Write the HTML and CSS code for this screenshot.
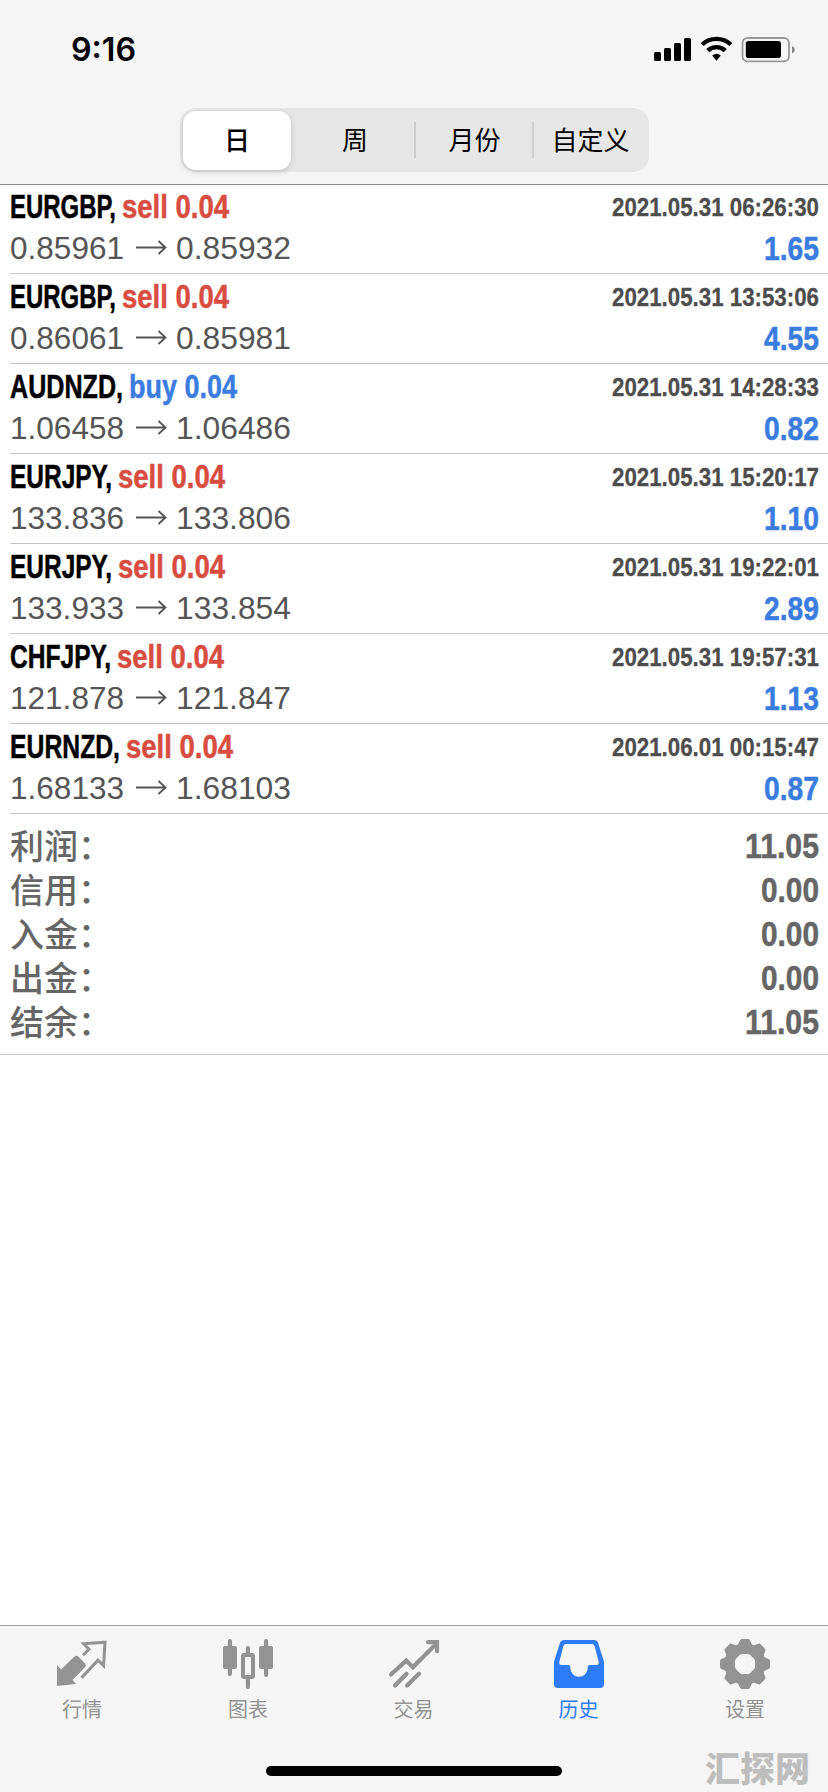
FILE: index.html
```html
<!DOCTYPE html>
<html lang="zh-CN">
<head>
<meta charset="utf-8">
<title>历史</title>
<link rel="stylesheet" href="styles.css">
</head>
<body>
<div class="app">
  <header class="top">
    <div class="status">
      <span class="clock"><span class="fit" data-w="65">9:16</span></span>
      <svg class="status-icons" width="144" height="28" viewBox="0 0 144 28">
        <rect x="1" y="16" width="7" height="9" rx="1.6"/>
        <rect x="11" y="12" width="7" height="13" rx="1.6"/>
        <rect x="21" y="7" width="7" height="18" rx="1.6"/>
        <rect x="31" y="2" width="7" height="23" rx="1.6"/>
        <g fill="none" stroke="#000" stroke-width="4.4">
          <path d="M49.2 8.500a21 21 0 0 1 28.600 0"/>
          <path d="M54.800 14.600a12.600 12.600 0 0 1 17.400 0"/>
        </g>
        <path d="M59.200 19.400q4.300-3.200 8.600 0L63.500 24.800z"/>
        <rect x="89.500" y="2" width="46.500" height="23.300" rx="5" fill="none" stroke="#999" stroke-width="1.800"/>
        <rect x="92.800" y="5" width="35.200" height="17" rx="2.800"/>
        <path d="M139 10q2.800 1 2.800 3.800t-2.800 3.800z" fill="#888"/>
      </svg>
    </div>
    <nav class="segments">
      <span class="seg seg-on">日</span>
      <span class="seg seg-week">周</span>
      <span class="seg seg-line">月份</span>
      <span class="seg seg-line">自定义</span>
    </nav>
  </header>

  <main class="content">
    <ul class="deals" id="deals"></ul>
    <dl class="totals">
      <div class="total"><dt>利润：</dt><dd><span class="fit" data-w="74">11.05</span></dd></div>
      <div class="total"><dt>信用：</dt><dd><span class="fit" data-w="58">0.00</span></dd></div>
      <div class="total"><dt>入金：</dt><dd><span class="fit" data-w="58">0.00</span></dd></div>
      <div class="total"><dt>出金：</dt><dd><span class="fit" data-w="58">0.00</span></dd></div>
      <div class="total"><dt>结余：</dt><dd><span class="fit" data-w="74">11.05</span></dd></div>
    </dl>
  </main>

  <footer class="tabs">
    <a class="tab">
      <svg width="52" height="52" viewBox="0 0 52 52">
        <path d="M1 27l4 4.400L18.500 18.600q2-1.800 3.800 0l6.800 7q1.600 1.800 0 3.600L16.500 42l3.500 4L1 48z" fill="currentColor"/>
        <path d="M27 17.300l6-6-5.400-5.600L49 4.200 47.600 27.600 42 22.200 25.600 39.600" fill="none" stroke="currentColor" stroke-width="3"/>
      </svg>
      <span>行情</span>
    </a>
    <a class="tab">
      <svg width="52" height="52" viewBox="0 0 52 52">
        <g fill="currentColor">
          <rect x="5.800" y="1" width="4.200" height="37" rx="2.100"/><rect x="1" y="8" width="14" height="23" rx="2"/>
          <rect x="42" y="1" width="4.200" height="38" rx="2.100"/><rect x="37" y="8" width="14" height="23" rx="2"/>
          <rect x="23.800" y="8" width="4.200" height="10" rx="2.100"/><rect x="23.800" y="38" width="4.200" height="13" rx="2.100"/>
        </g>
        <rect x="21" y="17" width="10" height="22" rx="1" fill="none" stroke="currentColor" stroke-width="4"/>
      </svg>
      <span>图表</span>
    </a>
    <a class="tab">
      <svg width="52" height="52" viewBox="0 0 52 52">
        <g fill="none" stroke="currentColor" stroke-width="4.200" stroke-linecap="round" stroke-linejoin="miter">
          <path d="M3 36.500L18.200 22.600l6.600 6.600L48 6"/>
          <path d="M40 4.200h9v9"/>
          <path d="M7 47.500L18.500 35.800M19 47.500L31 35.800"/>
        </g>
      </svg>
      <span>交易</span>
    </a>
    <a class="tab tab-on">
      <svg width="52" height="52" viewBox="0 0 52 52">
        <path fill="currentColor" fill-rule="evenodd" d="M11 2h30q3 0 4 2.800L50.500 22q.5 1.800.5 3.600V46q0 4-4 4H5q-4 0-4-4V25.600q0-1.800.5-3.600L7 4.800Q8 2 11 2zM13 6q-2 0-2.600 2L6.400 23.500q-.6 3.500 2 3.500H15.500q1.800 0 1.800 1.800V30a8.700 8.700 0 0 0 17.400 0v-1.200q0-1.800 1.800-1.800h7.100q2.600 0 2-3.500L41.600 8q-.6-2-2.600-2z"/>
      </svg>
      <span>历史</span>
    </a>
    <a class="tab">
      <svg width="52" height="52" viewBox="0 0 52 52">
        <g fill="currentColor" stroke="currentColor" stroke-width="4" stroke-linejoin="round">
          <path id="tooth" d="M19.500 10l3.500-7h6l3.500 7-6.500 4zM19.500 42l3.500 7h6l3.500-7-6.500-4z"/>
          <use href="#tooth" transform="rotate(45 26 26)"/>
          <use href="#tooth" transform="rotate(90 26 26)"/>
          <use href="#tooth" transform="rotate(135 26 26)"/>
        </g>
        <circle cx="26" cy="26" r="15.500" fill="none" stroke="currentColor" stroke-width="10"/>
      </svg>
      <span>设置</span>
    </a>
    <div class="home-bar"></div>
    <div class="mark">汇探网</div>
  </footer>
</div>
<script src="app.js"></script>
</body>
</html>
```
FILE: styles.css
```css
* { box-sizing: border-box; }
body { margin: 0; background: #fff; font-family: "Liberation Sans", "Noto Sans CJK SC", sans-serif; }
.app { width: 828px; height: 1792px; display: flex; flex-direction: column; overflow: hidden; }

.top { height: 185px; flex: none; background: #f6f6f6; border-bottom: 1px solid #8c8c8c; }
.status { height: 108px; padding: 30px 31px 0 71px; display: flex; justify-content: space-between; }
.clock { font: 600 32px/40px Inter, sans-serif; white-space: nowrap; }
.status-icons { margin-top: 6px; }

.segments { width: 469px; height: 64px; margin-left: 180px; padding: 3px; border-radius: 16px; background: #e7e7e7; display: grid; grid-template-columns: 108px 123px 118px 1fr; }
.seg { display: flex; align-items: center; justify-content: center; font: 400 26px/56px "Noto Sans CJK SC", sans-serif; color: #000; position: relative; padding: 0 0 3px 3px; }
.seg-week { padding-left: 5px; }
.seg-on { padding-left: 0; background: #fff; border-radius: 13px; font-weight: 500; box-shadow: 0 2px 6px rgba(0,0,0,.16); }
.seg-line::before { content: ""; position: absolute; left: 0; top: 11px; width: 2px; height: 36px; background: #cfcfcf; }

.content { flex: 1; }
.fit { display: inline-block; white-space: nowrap; transform-origin: 0 50%; }
.deals { list-style: none; margin: 0; padding: 0 0 0 10px; }
.deal { height: 90px; border-bottom: 1px solid #c4c4c4; padding: 4px 9px 0 0; display: grid; grid-template-rows: 38px 44px; }
.deal:first-child { height: 89px; padding-top: 3px; }
.deal-row { display: flex; justify-content: space-between; align-items: flex-start; }
.head { display: flex; gap: 6px; font-weight: 700; font-size: 33px; line-height: 38px; color: #000; -webkit-text-stroke: .5px currentColor; }
.side-sell { color: #d84d3f; }
.side-buy { color: #3b7ce0; }
.time { font-weight: 700; font-size: 25.5px; line-height: 38px; color: #4d4d4d; -webkit-text-stroke: .3px currentColor; }
.prices { display: flex; font-size: 32px; line-height: 44px; color: #555; }
.arrow { margin: 14px 9px 0 12px; }
.profit { font-weight: 700; font-size: 33px; line-height: 46px; color: #3b7ce0; -webkit-text-stroke: .5px currentColor; }

.totals { margin: 0; height: 241px; padding: 8px 9px 0 10px; border-bottom: 1px solid #c4c4c4; }
.total { height: 44px; display: flex; justify-content: space-between; color: #666; }
.total dt { font: 500 34px/46px "Noto Sans CJK SC", sans-serif; }
.total dd { margin: 0; font-weight: 700; font-size: 34.5px; line-height: 48px; -webkit-text-stroke: .5px currentColor; }

.tabs { position: relative; flex: none; height: 167px; background: #f6f6f6; border-top: 1px solid #a6a6a6; display: grid; grid-template-columns: 164px 168px 163px 167px 166px; }
.tab { display: flex; flex-direction: column; align-items: center; padding-top: 12px; color: #939393; font: 400 20px/30px "Noto Sans CJK SC", sans-serif; }
.tab span { margin-top: 4px; }
.tab svg { display: block; }
.tab-on { color: #2e7bf6; }
.home-bar { position: absolute; left: 266px; top: 140px; width: 296px; height: 10px; border-radius: 5px; background: #000; }
.mark { position: absolute; right: 18px; top: 116px; font: 900 35px/50px "Noto Sans CJK SC", sans-serif; color: #bebebe; }
```
FILE: app.js
```js
const deals = [
  ["EURGBP,", 106, "sell", 107, "0.85961", "0.85932", "2021.05.31 06:26:30", "1.65"],
  ["EURGBP,", 106, "sell", 107, "0.86061", "0.85981", "2021.05.31 13:53:06", "4.55"],
  ["AUDNZD,", 113, "buy", 108, "1.06458", "1.06486", "2021.05.31 14:28:33", "0.82"],
  ["EURJPY,", 102, "sell", 107, "133.836", "133.806", "2021.05.31 15:20:17", "1.10"],
  ["EURJPY,", 102, "sell", 107, "133.933", "133.854", "2021.05.31 19:22:01", "2.89"],
  ["CHFJPY,", 101, "sell", 107, "121.878", "121.847", "2021.05.31 19:57:31", "1.13"],
  ["EURNZD,", 110, "sell", 107, "1.68133", "1.68103", "2021.06.01 00:15:47", "0.87"]
];

const fit = (text, width, cls = "") => `<span class="fit ${cls}" data-w="${width}">${text}</span>`;

document.getElementById("deals").innerHTML = deals.map(([symbol, symbolW, side, sideW, from, to, time, profit]) => `
  <li class="deal">
    <div class="deal-row">
      <div class="head">${fit(symbol, symbolW)}${fit(side + " 0.04", sideW, "side-" + side)}</div>
      <div class="time">${fit(time, 207)}</div>
    </div>
    <div class="deal-row">
      <div class="prices">${fit(from, 114)}<svg class="arrow" width="31" height="15" viewBox="0 0 31 15"><path d="M0 7.5H29M22.5 1l7 6.500-7 6.500" fill="none" stroke="#555" stroke-width="1.800"/></svg>${fit(to, 115)}</div>
      <div class="profit">${fit(profit, 55)}</div>
    </div>
  </li>`).join("");

// Condense each figure to its column width
document.querySelectorAll(".fit").forEach(el => {
  const natural = el.getBoundingClientRect().width;
  const target = Number(el.dataset.w);
  el.style.transform = `scaleX(${target / natural})`;
  el.style.marginRight = `${target - natural}px`;
});
```
